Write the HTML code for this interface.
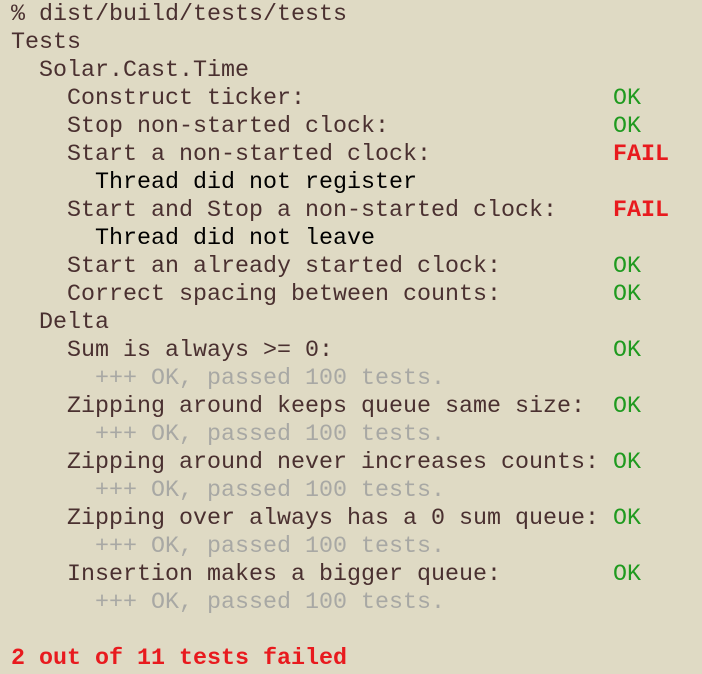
<!DOCTYPE html>
<html><head><style>
html,body{margin:0;padding:0;background:#dfdac4;width:702px;height:674px;overflow:hidden}
pre{margin:0;position:absolute;left:11px;top:1px;font-family:"Liberation Mono",monospace;font-size:23.33px;line-height:28px;color:#4a3030;white-space:pre}
.b{color:#000}.g{color:#1f9a1f}.r{color:#e81a1e;font-weight:bold}.y{color:#a8a8a4}
</style></head><body>
<pre>% dist/build/tests/tests
Tests
  Solar.Cast.Time
    Construct ticker:                      <span class="g">OK</span>
    Stop non-started clock:                <span class="g">OK</span>
    Start a non-started clock:             <span class="r">FAIL</span>
      <span class="b">Thread did not register</span>
    Start and Stop a non-started clock:    <span class="r">FAIL</span>
      <span class="b">Thread did not leave</span>
    Start an already started clock:        <span class="g">OK</span>
    Correct spacing between counts:        <span class="g">OK</span>
  Delta
    Sum is always &gt;= 0:                    <span class="g">OK</span>
      <span class="y">+++ OK, passed 100 tests.</span>
    Zipping around keeps queue same size:  <span class="g">OK</span>
      <span class="y">+++ OK, passed 100 tests.</span>
    Zipping around never increases counts: <span class="g">OK</span>
      <span class="y">+++ OK, passed 100 tests.</span>
    Zipping over always has a 0 sum queue: <span class="g">OK</span>
      <span class="y">+++ OK, passed 100 tests.</span>
    Insertion makes a bigger queue:        <span class="g">OK</span>
      <span class="y">+++ OK, passed 100 tests.</span>

<span class="r">2 out of 11 tests failed</span></pre>
</body></html>
